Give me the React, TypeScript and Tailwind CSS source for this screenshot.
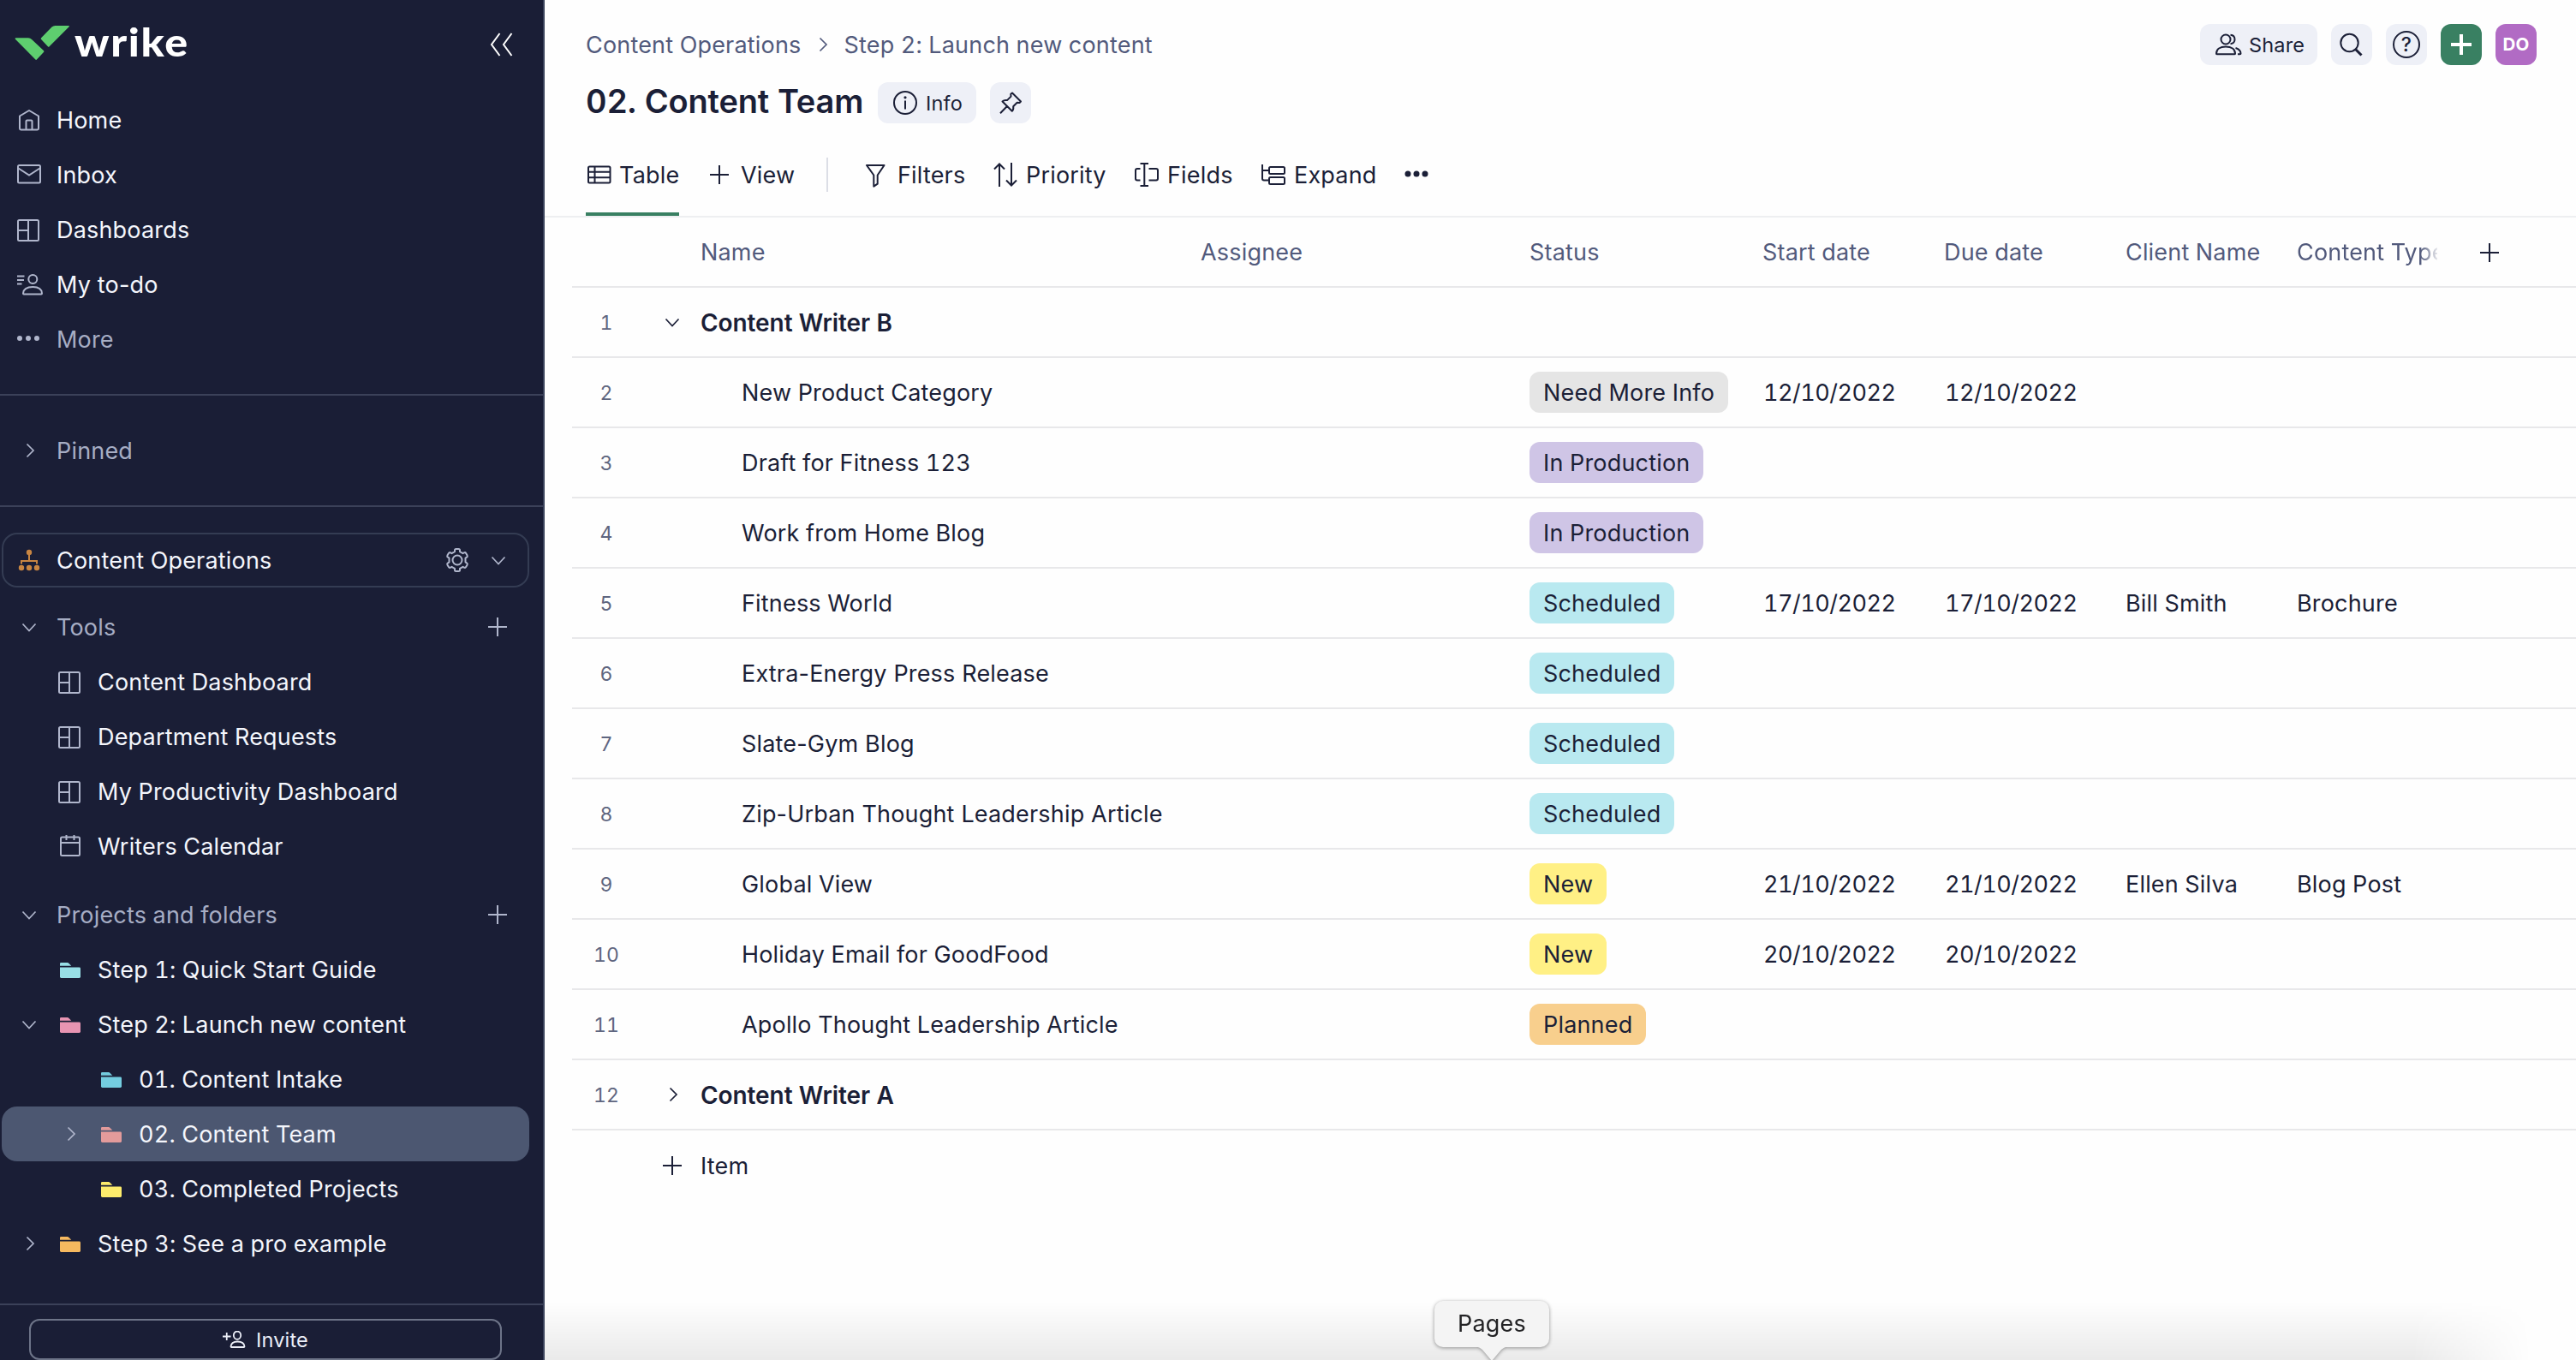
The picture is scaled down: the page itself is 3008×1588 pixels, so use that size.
import type { ReactNode } from "react";

type IconProps = { className?: string; size?: number; sw?: number; children: ReactNode };

function Icon({ className = "", size = 32, sw = 2, children }: IconProps) {
  return (
    <svg
      width={size}
      height={size}
      viewBox={`0 0 ${size} ${size}`}
      fill="none"
      stroke="currentColor"
      strokeWidth={sw}
      className={`shrink-0 ${className}`}
    >
      {children}
    </svg>
  );
}

const HomeIcon = () => (
  <Icon>
    <path d="M5 11.5 16 5l11 6.5V26a1.4 1.4 0 0 1-1.4 1.4H6.4A1.4 1.4 0 0 1 5 26Z" strokeLinejoin="round" />
    <path d="M12.5 27v-9.5a1 1 0 0 1 1-1h5a1 1 0 0 1 1 1V27" />
  </Icon>
);
const MailIcon = () => (
  <Icon>
    <rect x="3" y="5" width="26" height="20.5" rx="1.5" />
    <path d="M3.5 8.5 16 16.5l12.5-8" />
  </Icon>
);
const DashIcon = () => (
  <Icon>
    <rect x="3" y="5" width="24" height="24" rx="1.5" />
    <path d="M15 5v24M3 17h12" />
  </Icon>
);
const TodoIcon = () => (
  <Icon>
    <circle cx="20.3" cy="10" r="5" />
    <path d="M9 26.6c.4-5 5-7.6 11.3-7.6s10.5 2.6 10.7 7.6c0 .5-.3.9-.8.9H9.8c-.5 0-.8-.4-.8-.9Z" />
    <path d="M2 6.500h8.500M2 11h8M2 15.500h5.500" />
  </Icon>
);
const DotsIcon = () => (
  <Icon>
    <g fill="currentColor" stroke="none">
      <circle cx="5" cy="15" r="3" />
      <circle cx="15" cy="15" r="3" />
      <circle cx="25" cy="15" r="3" />
    </g>
  </Icon>
);
const ChevronRight = () => (
  <Icon sw={1.7}>
    <path d="m13.500 8.500 7.500 7.500-7.500 7.500" />
  </Icon>
);
const ChevronDown = () => (
  <Icon sw={1.7}>
    <path d="m8.500 12.500 7.500 8 7.500-8" />
  </Icon>
);
const PlusIcon = () => (
  <Icon>
    <path d="M16 5v22M5 16h22" />
  </Icon>
);
const OrgIcon = () => (
  <Icon className="text-[#c98642]">
    <g fill="currentColor" stroke="none">
      <circle cx="16" cy="7" r="3.200" />
      <circle cx="7" cy="25" r="3.200" />
      <circle cx="16" cy="25" r="3.200" />
      <circle cx="25" cy="25" r="3.200" />
    </g>
    <path d="M16 9v8M7 20.500V17h18v3.500" />
  </Icon>
);
const GearIcon = () => (
  <Icon>
    <circle cx="16" cy="16" r="5.500" />
    <path
      d="M13 4.500Q13 3 14.500 3h3Q19 3 19 4.500V6.200L22.500 8.200 23.900 7.400Q25.300 6.600 26.100 8L27.600 10.600Q28.300 11.900 27 12.700L25.500 13.700V18.300L27 19.300Q28.300 20.100 27.600 21.400L26.100 24Q25.300 25.400 23.900 24.600L22.500 23.800 19 25.800V27.500Q19 29 17.500 29h-3Q13 29 13 27.500V25.800L9.500 23.800 8.100 24.600Q6.700 25.400 5.900 24L4.400 21.400Q3.700 20.100 5 19.300L6.500 18.300V13.700L5 12.700Q3.700 11.900 4.400 10.600L5.900 8Q6.700 6.600 8.100 7.400L9.500 8.200 13 6.200Z"
      strokeLinejoin="round"
    />
  </Icon>
);
const CalendarIcon = () => (
  <Icon>
    <rect x="5" y="5.500" width="22" height="21.500" rx="1.500" />
    <path d="M5 12h22M11.500 3v6M20.500 3v6" />
  </Icon>
);
const Folder = ({ className }: { className: string }) => (
  <Icon className={className}>
    <g fill="currentColor" stroke="none">
      <path d="M4 11.700V9.200Q4 8 5.200 8h7.600a2 2 0 0 1 1.500.7l3 3Z" />
      <path d="M4 13.600h22.600q1.400 0 1.400 1.400v9.600q0 1.400-1.400 1.400H5.400Q4 26 4 24.600Z" />
    </g>
  </Icon>
);

/* Tabular figures also widen the hyphen, so hyphenated labels keep proportional figures. */
const figures = (text: string) => (text.includes("-") ? "proportional-nums" : "tabular-nums");

function SideRow({
  level = 0,
  chevron,
  icon,
  label,
  muted,
  trailing,
  className = "",
}: {
  level?: number;
  chevron?: ReactNode;
  icon?: ReactNode;
  label: string;
  muted?: boolean;
  trailing?: ReactNode;
  className?: string;
}) {
  return (
    <div className={`flex h-16 shrink-0 items-center pl-4 text-[#b0b6cc] ${className}`}>
      {level === 2 && <span className="w-12 shrink-0" />}
      {level > 0 && <span className="w-12 shrink-0">{chevron}</span>}
      <span className="w-12 shrink-0">{level === 0 ? (chevron ?? icon) : icon}</span>
      <span
        className={`flex-1 whitespace-nowrap pt-0.5 ${figures(label)} ${muted ? "text-[#a6adc4]" : "text-[#f4f6fc]"}`}
      >
        {label}
      </span>
      {trailing}
    </div>
  );
}

function Sidebar() {
  return (
    <aside className="flex h-full w-[636px] shrink-0 flex-col border-r-2 border-[#3b435b] bg-[#1a1e36]">
      <div className="flex h-[108px] shrink-0 items-start justify-between pl-[17px] pr-[33px] pt-6">
        <div className="flex items-start">
          <svg width="66" height="46" viewBox="0 0 66 46" fill="#5ece6f">
            <path d="M1.800 20.300H16q2.400 0 4 1.600L33.900 35a1.300 1.300 0 0 1 0 1.900l-8 8.600a1 1 0 0 1-1.500 0L.9 21.700Q0 20.300 1.800 20.300Z" />
            <path d="M43.500 7.500Q45.200 6 47.500 6H63q1.700 0 .6 1.300L40.600 30.300a1.100 1.100 0 0 1-1.700 0l-7.800-8.200a1.300 1.300 0 0 1 0-1.900Z" />
          </svg>
          <span className="ml-1 mt-[-3px] origin-left scale-x-[1.09] font-['Lato'] text-[46px] font-black leading-[56px] tracking-[1.500px] text-white">
            wrike
          </span>
        </div>
        <Icon className="mt-3 text-white">
          <path d="M14.500 3 5 16l9.500 13M28.500 3 19 16l9.500 13" />
        </Icon>
      </div>

      <nav className="flex h-[352px] shrink-0 flex-col pl-0.5">
        <SideRow icon={<HomeIcon />} label="Home" />
        <SideRow icon={<MailIcon />} label="Inbox" />
        <SideRow icon={<DashIcon />} label="Dashboards" />
        <SideRow icon={<TodoIcon />} label="My to-do" />
        <SideRow icon={<DotsIcon />} label="More" muted />
      </nav>

      <div className="flex h-[132px] shrink-0 flex-col justify-center border-y-2 border-[#3b4159] pl-0.5">
        <SideRow chevron={<ChevronRight />} label="Pinned" muted />
      </div>

      <div className="flex flex-1 flex-col pl-0.5 pr-4 pt-[30px]">
        <SideRow
          className="rounded-[18px] pr-5 shadow-[inset_0_0_0_2px_#343c53]"
          icon={<OrgIcon />}
          label="Content Operations"
          trailing={
            <span className="flex gap-4">
              <GearIcon />
              <ChevronDown />
            </span>
          }
        />
        <SideRow
          className="mt-3.5 pr-[21px]"
          chevron={<ChevronDown />}
          label="Tools"
          muted
          trailing={<PlusIcon />}
        />
        <SideRow level={1} icon={<DashIcon />} label="Content Dashboard" />
        <SideRow level={1} icon={<DashIcon />} label="Department Requests" />
        <SideRow level={1} icon={<DashIcon />} label="My Productivity Dashboard" />
        <SideRow level={1} icon={<CalendarIcon />} label="Writers Calendar" />
        <SideRow
          className="mt-4 pr-[21px]"
          chevron={<ChevronDown />}
          label="Projects and folders"
          muted
          trailing={<PlusIcon />}
        />
        <SideRow level={1} icon={<Folder className="text-[#98dfe6]" />} label="Step 1: Quick Start Guide" />
        <SideRow
          level={1}
          chevron={<ChevronDown />}
          icon={<Folder className="text-[#e894b2]" />}
          label="Step 2: Launch new content"
        />
        <SideRow level={2} icon={<Folder className="text-[#74cde0]" />} label="01. Content Intake" />
        <div className="flex rounded-[18px] bg-[#4c5771] pl-12">
          <SideRow
            level={1}
            chevron={<ChevronRight />}
            icon={<Folder className="text-[#e39b9b]" />}
            label="02. Content Team"
          />
        </div>
        <SideRow level={2} icon={<Folder className="text-[#fdec6c]" />} label="03. Completed Projects" />
        <SideRow
          level={1}
          chevron={<ChevronRight />}
          icon={<Folder className="text-[#f6b95f]" />}
          label="Step 3: See a pro example"
        />
      </div>

      <div className="h-[66px] shrink-0 border-t-2 border-[#3b4159] pl-[34px] pr-12 pt-4">
        <div className="flex h-12 items-center justify-center gap-3 rounded-xl border-2 border-[#6d7488] text-[23.500px] text-[#eceff8]">
          <svg width="27" height="20" viewBox="0 0 27 20" fill="none" stroke="currentColor" strokeWidth="1.800">
            <path d="M0 6.500h9.500M4.750 2v9" />
            <ellipse cx="17" cy="5.200" rx="4.200" ry="4.600" />
            <path d="M9.500 18.200c.4-3.800 3.500-5.700 7.800-5.700s7.900 1.900 8.200 5.700q0 .8-.8.800H10.300q-.8 0-.8-.800Z" />
          </svg>
          <span className="pt-0.5">Invite</span>
        </div>
      </div>
    </aside>
  );
}

const rows: {
  n: number;
  name: string;
  group?: "open" | "closed";
  status?: keyof typeof badge;
  start?: string;
  client?: string;
  type?: string;
}[] = [
  { n: 1, name: "Content Writer B", group: "open" },
  { n: 2, name: "New Product Category", status: "Need More Info", start: "12/10/2022" },
  { n: 3, name: "Draft for Fitness 123", status: "In Production" },
  { n: 4, name: "Work from Home Blog", status: "In Production" },
  { n: 5, name: "Fitness World", status: "Scheduled", start: "17/10/2022", client: "Bill Smith", type: "Brochure" },
  { n: 6, name: "Extra-Energy Press Release", status: "Scheduled" },
  { n: 7, name: "Slate-Gym Blog", status: "Scheduled" },
  { n: 8, name: "Zip-Urban Thought Leadership Article", status: "Scheduled" },
  { n: 9, name: "Global View", status: "New", start: "21/10/2022", client: "Ellen Silva", type: "Blog Post" },
  { n: 10, name: "Holiday Email for GoodFood", status: "New", start: "20/10/2022" },
  { n: 11, name: "Apollo Thought Leadership Article", status: "Planned" },
  { n: 12, name: "Content Writer A", group: "closed" },
];

const badge = {
  "Need More Info": "bg-[#e5e5e5]",
  "In Production": "bg-[#cfc5e6]",
  Scheduled: "bg-[#b9e9f0]",
  New: "bg-[#fff085]",
  Planned: "bg-[#f8cf8d]",
};

const cols =
  "grid grid-cols-[80px_69px_585px_384px_272px_212px_212px_200px_164px_1fr] items-center whitespace-nowrap";

function Table() {
  return (
    <div className="ml-8">
      <div className={`${cols} h-[82px] border-b-2 border-[#e8e8ea] text-[#525a7c] [&>span]:pt-0.5`}>
        <span />
        <span />
        <span className="pl-px">Name</span>
        <span>Assignee</span>
        <span>Status</span>
        <span>Start date</span>
        <span>Due date</span>
        <span>Client Name</span>
        <span className="overflow-hidden [mask-image:linear-gradient(to_right,black_88%,transparent_102%)]">
          Content Type
        </span>
        <span className="pl-[45px] text-[#1b1f37]">
          <PlusIcon />
        </span>
      </div>
      {rows.map((r) => (
        <div key={r.n} className={`${cols} h-[82px] border-b-2 border-[#e8e8ea]`}>
          <span className="pt-0.5 text-center text-[23px] text-[#5f6680]">{r.n}</span>
          <span className="pl-[21px]">
            {r.group === "open" && <ChevronDown />}
            {r.group === "closed" && <ChevronRight />}
          </span>
          <span
            className={`pt-0.5 ${figures(r.name)} ${r.group ? "pl-px text-[28px] font-semibold tracking-[-0.080px]" : "pl-[49px]"}`}
          >
            {r.name}
          </span>
          <span />
          <span className="flex">
            {r.status && (
              <span className={`flex h-12 items-center rounded-xl px-4 pt-0.5 ${badge[r.status]}`}>{r.status}</span>
            )}
          </span>
          <span className="pl-px pt-0.5 tracking-[-0.500px]">{r.start}</span>
          <span className="pl-px pt-0.5 tracking-[-0.500px]">{r.start}</span>
          <span className="pt-0.5">{r.client}</span>
          <span className="pt-0.5">{r.type}</span>
          <span />
        </div>
      ))}
      <div className="flex h-[82px] items-center pl-[101px]">
        <PlusIcon />
        <span className="ml-[17px] pt-0.5">Item</span>
      </div>
    </div>
  );
}

function Header() {
  return (
    <header className="flex h-[254px] shrink-0 flex-col border-b-2 border-[#eeeff1] pl-12 pr-[46px]">
      <div className="flex h-[84px] items-center justify-between pt-5">
        <div className="flex items-center text-[#525a7c]">
          <span className="pt-0.5">Content Operations</span>
          <span className="mx-[9px]">
            <ChevronRight />
          </span>
          <span className="pt-0.5">Step 2: Launch new content</span>
        </div>
        <div className="flex gap-4 text-[#1b1f37]">
          <div className="flex h-12 w-[137px] items-center gap-2 rounded-xl bg-[#eef0f7] pl-[17px] text-[23.500px]">
            <Icon>
              <circle cx="13" cy="10" r="5.500" />
              <path d="M18.500 4.800c3 .3 5 2.400 5 5.200s-2 4.900-5 5.200" />
              <path d="M2 26.400c0-5 4.500-8 11-8s11 3 11 8q0 .9-1 .9H3q-1 0-1-.9ZM24.500 20c3.800 1.200 6 3.600 6 6.500q0 .8-.9.800H27" />
            </Icon>
            <span className="pt-0.5">Share</span>
          </div>
          <div className="flex size-12 items-center justify-center rounded-xl bg-[#eef0f7]">
            <Icon>
              <circle cx="13.500" cy="14" r="10.200" />
              <path d="m20.500 21.500 7 7" strokeWidth="3" />
            </Icon>
          </div>
          <div className="flex size-12 items-center justify-center rounded-xl bg-[#eef0f7]">
            <div className="flex size-8 items-center justify-center rounded-full border-2 border-[#1b1f37] text-[23px] font-medium leading-none">
              ?
            </div>
          </div>
          <div className="flex size-12 items-center justify-center rounded-xl bg-[#398062] text-white">
            <Icon sw={4}>
              <path d="M16 4v24M4 16h24" />
            </Icon>
          </div>
          <div className="flex size-12 items-center justify-center rounded-xl bg-[#b16bc4] text-[20.500px] font-bold text-white">
            DO
          </div>
        </div>
      </div>

      <div className="flex h-[72px] items-center text-[#1b1f37]">
        <h1 className="w-[341px] whitespace-nowrap pb-[3px] text-[38px] font-semibold tracking-[-0.200px]">
          02. Content Team
        </h1>
        <div className="flex h-12 w-[115px] items-center gap-2 rounded-xl bg-[#eef0f7] pl-4 text-[23.500px]">
          <Icon>
            <circle cx="16" cy="16" r="13" />
            <path d="M16 13.500v10" />
            <circle cx="16" cy="9.800" r="1.600" fill="currentColor" stroke="none" />
          </Icon>
          <span className="pt-0.5">Info</span>
        </div>
        <div className="ml-4 flex size-12 items-center justify-center rounded-xl bg-[#eef0f7]">
          <Icon>
            <path
              d="M18 4.500 28 14.500 26.500 16l-2.800-.2-4.500 4.500q.6 3.500-1.400 5.500L6.500 14.500q2-2 5.500-1.400l4.500-4.500-.2-2.800ZM12 20l-8 8.300"
              strokeLinejoin="round"
            />
          </Icon>
        </div>
      </div>

      <div className="flex h-24 items-stretch text-[#1b1f37]">
        <div className="flex w-[109px] items-center border-b-4 border-[#398062] pt-1">
          <Icon className="mr-[7px]">
            <rect x="3" y="6.500" width="25.500" height="19" rx="1.500" />
            <path d="M3 12.800h25.500M3 19.200h25.500M10.500 6.500v19" />
          </Icon>
          <span className="pt-0.5">Table</span>
        </div>
        <div className="ml-[31px] flex w-[141px] items-center">
          <PlusIcon />
          <span className="ml-[9px] pt-0.5">View</span>
        </div>
        <span className="h-10 w-0.5 self-center bg-[#dcdee6]" />
        <div className="ml-[39px] flex w-[152px] items-center">
          <Icon>
            <path d="M6 5h20.500l-7.800 11.500v10.200l-4.400 3V16.500Z" strokeLinejoin="round" />
          </Icon>
          <span className="ml-2.5 pt-0.5">Filters</span>
        </div>
        <div className="flex w-[165px] items-center">
          <Icon>
            <path d="M9 30V4M3 9.500l6-6 6 6M23 2v26M17 22.500l6 6 6-6" />
          </Icon>
          <span className="ml-2 pt-0.5">Priority</span>
        </div>
        <div className="flex w-[148px] items-center">
          <Icon>
            <path d="M8.500 3h9.500M8.500 29H18M13.300 3v26M8.500 9H5Q3 9 3 11v9.500q0 2 2 2h3.500M18.500 9H27q2 0 2 2v9.500q0 2-2 2h-8.500" />
          </Icon>
          <span className="ml-2 pt-0.5">Fields</span>
        </div>
        <div className="flex w-[167px] items-center">
          <Icon>
            <path d="M3 4v16.500q0 2 2 2h6M3 11h8" />
            <rect x="11" y="7" width="18" height="8" rx="1.500" />
            <rect x="11" y="19" width="18" height="8" rx="1.500" />
          </Icon>
          <span className="ml-2 pt-0.5">Expand</span>
        </div>
        <Icon className="self-center">
          <g fill="currentColor" stroke="none">
            <circle cx="6" cy="15" r="3.500" />
            <circle cx="16" cy="15" r="3.500" />
            <circle cx="26" cy="15" r="3.500" />
          </g>
        </Icon>
      </div>
    </header>
  );
}

function Tooltip() {
  return (
    <div className="absolute bottom-0 left-[1675px] flex h-[69px] w-[134px] flex-col items-center drop-shadow-[0_1px_2px_rgba(0,0,0,0.4)]">
      <div className="flex h-[54px] w-full shrink-0 items-center justify-center rounded-[10px] bg-[#f4f4f4] text-[27px] text-[#232325]">
        Pages
      </div>
      <svg width="40" height="17" viewBox="0 0 40 17" className="-mt-px shrink-0" fill="#f4f4f4">
        <path d="M0 0h40Q34 1 31 4L20 17 9 4Q6 1 0 0Z" />
      </svg>
    </div>
  );
}

export default function App() {
  return (
    <div className="relative flex h-[1588px] w-[3008px] overflow-hidden bg-[#fefefe] font-['Inter',sans-serif] text-[27px] tabular-nums tracking-[0.180px] text-[#1b1f37]">
      <Sidebar />
      <main className="flex flex-1 flex-col">
        <Header />
        <Table />
      </main>
      <div className="absolute bottom-0 left-[636px] h-[68px] w-[2320px] bg-linear-to-b from-transparent to-black/8 [mask-image:linear-gradient(to_right,black_94%,transparent)]" />
      <Tooltip />
    </div>
  );
}
